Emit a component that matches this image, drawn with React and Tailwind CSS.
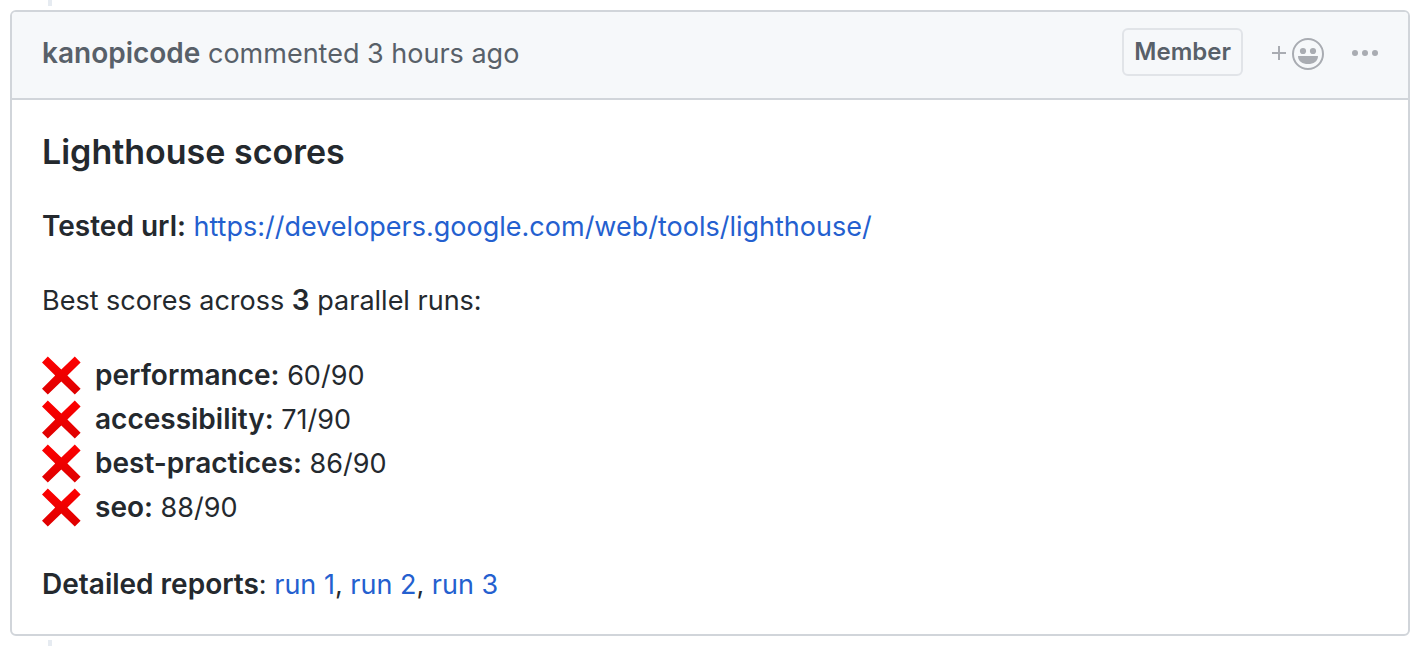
const scores = [
  { name: "performance", value: 60 },
  { name: "accessibility", value: 71 },
  { name: "best-practices", value: 86 },
  { name: "seo", value: 88 },
];

function CrossMark() {
  return (
    <svg viewBox="0 0 40 40" className="size-10 shrink-0" role="img" aria-label="failed">
      <defs>
        <linearGradient id="cross" x1="0" y1="0" x2="0" y2="1">
          <stop offset="0" stopColor="#ff0000" />
          <stop offset="1" stopColor="#dd0000" />
        </linearGradient>
      </defs>
      <path
        fill="url(#cross)"
        d="M5.800 .6 19.300 13.600 32.800 .6 38.600 6.400 25.400 19.600 38.600 32.800 32.800 38.600 19.300 25.600 5.800 38.600 0 32.800 13.200 19.600 0 6.400Z"
      />
    </svg>
  );
}

function AddReaction() {
  return (
    <svg viewBox="0 0 54 34" className="h-[34px] w-[54px]" fill="none" aria-hidden="true">
      <path d="M1 16H15M8 9V23" stroke="#a9acb2" strokeWidth="2" />
      <circle cx="37" cy="17" r="15" stroke="#a9acb2" strokeWidth="2" />
      <circle cx="32" cy="14" r="3.1" fill="#a9acb2" />
      <circle cx="42" cy="14" r="3.1" fill="#a9acb2" />
      <path d="M27 19H47C47 24.500 42.500 27 37 27S27 24.500 27 19Z" fill="#a9acb2" />
    </svg>
  );
}

function Dots() {
  return (
    <svg viewBox="0 0 26 8" className="h-2 w-[26px]" fill="#a9acb2" aria-hidden="true">
      <circle cx="3" cy="3" r="3" />
      <circle cx="13" cy="3" r="3" />
      <circle cx="23" cy="3" r="3" />
    </svg>
  );
}

function Bold({ children }) {
  return <strong className="text-[28px] leading-none font-semibold">{children}</strong>;
}

function Link({ children, href }) {
  return (
    <a href={href} className="text-[#2460cf] hover:underline">
      {children}
    </a>
  );
}

export default function App() {
  return (
    <div className="bg-white pr-2 pl-2.5 font-['Inter',sans-serif] text-[27px] leading-[42px] text-[#24292e]">
      <div className="mb-1 ml-[38px] h-1.5 w-1 bg-[#e6ebf1]" />
      <article className="overflow-hidden rounded-md border-2 border-[#d1d5da]">
        <header className="flex justify-between border-b-2 border-[#d1d5da] bg-[#f6f8fa] px-[30px] pt-4 pb-[18px] text-[#586069]">
          <h2 className="leading-[52px]">
            <Bold>kanopicode</Bold> commented 3 hours ago
          </h2>
          <div className="flex items-center">
            <span className="self-start rounded-md border-2 border-[#e1e4e8] px-2.5 text-2xl leading-[44px] font-semibold">
              Member
            </span>
            <button type="button" aria-label="Add your reaction" className="ml-7">
              <AddReaction />
            </button>
            <button type="button" aria-label="Show options" className="ml-[27px]">
              <Dots />
            </button>
          </div>
        </header>
        <div className="px-[30px] pt-[30px] pb-7">
          <h3 className="mb-8 text-[34px] leading-[44px] font-semibold">Lighthouse scores</h3>
          <p className="mb-8">
            <Bold>Tested url:</Bold>{" "}
            <Link href="https://developers.google.com/web/tools/lighthouse/">
              https://developers.google.com/web/tools/lighthouse/
            </Link>
          </p>
          <p className="mb-8">
            Best scores across <Bold>3</Bold> parallel runs:
          </p>
          <ul className="mb-[34px] leading-[44px]">
            {scores.map((score) => (
              <li key={score.name} className="flex items-center gap-[13px]">
                <CrossMark />
                <span>
                  <Bold>{score.name}:</Bold> {score.value}/90
                </span>
              </li>
            ))}
          </ul>
          <p>
            <Bold>Detailed reports</Bold>: <Link href="#run-1">run 1</Link>,{" "}
            <Link href="#run-2">run 2</Link>, <Link href="#run-3">run 3</Link>
          </p>
        </div>
      </article>
      <div className="mt-1 ml-[38px] h-1.5 w-1 bg-[#e6ebf1]" />
    </div>
  );
}
